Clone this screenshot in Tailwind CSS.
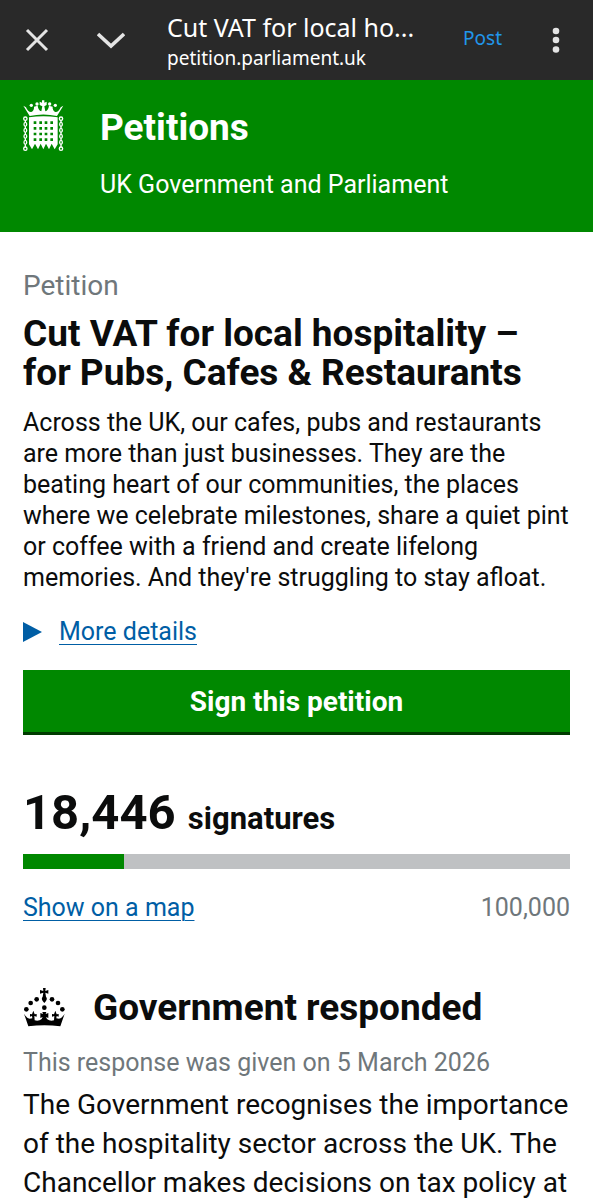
<!DOCTYPE html>
<html lang="en">
<head>
    <meta charset="UTF-8">
    <meta name="viewport" content="width=device-width, initial-scale=1.0">
    <title>Cut VAT for local hospitality – for Pubs, Cafes &amp; Restaurants</title>
    <script src="https://cdn.jsdelivr.net/npm/@tailwindcss/browser@4"></script>
</head>
<body class="bg-white text-[#0b0c0c] font-['Roboto',sans-serif] text-[25px] leading-[31px]">
    <!-- Browser bar -->
    <div class="flex items-center h-20 bg-[#292929] text-white font-['Noto_Sans',sans-serif]">
        <button type="button" aria-label="Close" class="shrink-0 w-[74px] flex justify-center">
            <svg class="w-6 h-6" viewBox="0 0 24 24" fill="none" stroke="#e4e4e4" stroke-width="3"><path d="M2 2 22 22M22 2 2 22"/></svg>
        </button>
        <button type="button" aria-label="Minimise" class="shrink-0 w-[74px] flex justify-center">
            <svg class="w-7 h-5" viewBox="0 0 28 20" fill="none" stroke="#e4e4e4" stroke-width="3.600"><path d="M1 4 14 16 27 4"/></svg>
        </button>
        <div class="flex-1 min-w-0 pl-[19px] pt-0.5">
            <div class="text-[25px] leading-[34px] truncate">Cut VAT for local ho...</div>
            <div class="text-[19px] leading-7 truncate">petition.parliament.uk</div>
        </div>
        <button type="button" class="shrink-0 mr-[50px] pb-1 text-[19px] text-[#2196ea]">Post</button>
        <button type="button" aria-label="Menu" class="shrink-0 mr-[33px]">
            <svg class="w-2 h-7" viewBox="0 0 8 28" fill="#e4e4e4"><circle cx="4" cy="5" r="3.300"/><circle cx="4" cy="14" r="3.300"/><circle cx="4" cy="23.500" r="3.300"/></svg>
        </button>
    </div>

    <header class="flex items-start gap-9 bg-[#008800] text-white px-[22px] pt-5 pb-8">
        <!-- Crowned portcullis -->
        <svg class="shrink-0 w-[42px] h-[52px]" viewBox="36 30 126 156" fill="#fff" aria-hidden="true">
            <path d="M40 47 59 78Q100 69 141 78L160 47L152 52Q146 67 136 66Q127 62 128 50L117 47Q115 61 106 64L103 49L110 45V35L103 38V31H96V38L89 35V45L97 49L94 64Q85 61 83 47L72 50Q73 62 64 66Q54 67 48 52Z"/>
            <circle cx="64" cy="46" r="5"/><circle cx="81" cy="42" r="5"/><circle cx="119" cy="42" r="5"/><circle cx="136" cy="46" r="5"/>
            <path d="M57 82Q100 76 143 82V163L134 178L125 161L117 178L108 161L100 178L92 161L84 178L75 161L66 178L57 163Z"/>
            <g stroke="#008800" stroke-width="8" stroke-dasharray="8 9" fill="none">
                <path d="M75 94V154M92 94V154M108 94V154M125 94V154"/>
            </g>
            <g fill="none" stroke="#fff" stroke-width="4">
                <circle cx="46" cy="86" r="5"/><ellipse cx="46" cy="103" rx="4" ry="6"/><ellipse cx="46" cy="121" rx="4" ry="6"/><ellipse cx="46" cy="139" rx="4" ry="6"/><ellipse cx="46" cy="157" rx="4" ry="6"/><circle cx="46" cy="176" r="5"/>
                <circle cx="153" cy="86" r="5"/><ellipse cx="153" cy="103" rx="4" ry="6"/><ellipse cx="153" cy="121" rx="4" ry="6"/><ellipse cx="153" cy="139" rx="4" ry="6"/><ellipse cx="153" cy="157" rx="4" ry="6"/><circle cx="153" cy="176" r="5"/>
                <path d="M46 91V97M46 109V115M46 127V133M46 145V151M46 163V171M153 91V97M153 109V115M153 127V133M153 145V151M153 163V171"/>
            </g>
        </svg>
        <div>
            <a href="#" class="block pt-2 text-[37px] leading-[39px] font-bold">Petitions</a>
            <p class="mt-[22px]">UK Government and Parliament</p>
        </div>
    </header>

    <main class="px-[23px] pt-[38px]">
        <p class="text-[28px] leading-8 text-[#6f777b]">Petition</p>
        <h1 class="mt-3 text-[37px] leading-[39px] font-bold">Cut VAT for local hospitality – for Pubs, Cafes &amp; Restaurants</h1>
        <p class="mt-[15px]">Across the UK, our cafes, pubs and restaurants are more than just businesses. They are the beating heart of our communities, the places where we celebrate milestones, share a quiet pint or coffee with a friend and create lifelong memories. And they're struggling to stay afloat.</p>

        <details class="mt-[23px] text-[#005ea5]">
            <summary class="flex items-center gap-[17px] cursor-pointer list-none">
                <svg class="w-[19px] h-5" viewBox="0 0 19 20" fill="currentColor" aria-hidden="true"><path d="M0 0 19 10 0 20Z"/></svg>
                <span class="underline decoration-1 underline-offset-4">More details</span>
            </summary>
        </details>

        <button type="button" class="block w-full mt-[23px] h-[65px] bg-[#008800] border-b-3 border-[#003c00] text-white text-[28px] font-bold">Sign this petition</button>

        <p class="mt-12 leading-[60px] font-bold"><span class="text-[49px]">18,446</span> <span class="ml-1.5 text-[31px]">signatures</span></p>
        <div class="mt-[3px] h-[15px] bg-[#bfc1c3]" role="progressbar" aria-label="Signatures" aria-valuenow="18446" aria-valuemin="0" aria-valuemax="100000">
            <div class="h-full bg-[#008800]" style="width: 18.446%"></div>
        </div>
        <div class="mt-[23px] flex justify-between">
            <a href="#" class="text-[#005ea5] underline decoration-1 underline-offset-4">Show on a map</a>
            <span class="text-[#6f777b]">100,000</span>
        </div>

        <section class="mt-16">
            <h2 class="flex items-center gap-7 text-[37px] leading-[39px] font-bold">
                <svg class="w-[42px] h-10" viewBox="38 34 126 120" aria-hidden="true">
                    <path d="M98 37H106L105 46L114 43V54L105 51L107 63Q112 68 107 76L102 82L97 76Q92 68 97 63L99 51L89 54V43L99 46Z"/>
                    <circle cx="102" cy="96" r="7"/>
                    <circle cx="79" cy="71" r="7"/><circle cx="61" cy="82" r="7"/><circle cx="48" cy="101" r="7"/>
                    <circle cx="125" cy="71" r="7"/><circle cx="143" cy="82" r="7"/><circle cx="156" cy="101" r="7"/>
                    <path d="M41 114 54 152Q102 145 150 152L163 114Q155 128 146 129L138 128L139 121L145 123V115L139 116L135 105L131 116L125 115V123L132 121L131 134Q118 137 110 130L107 124L114 127V112L106 115L108 109H96L98 115L90 112V127L97 124L94 130Q86 137 73 134L72 121L79 123V115L73 116L69 105L65 116L59 115V123L65 121L66 128L58 129Q49 128 41 114Z"/>
                </svg>
                Government responded
            </h2>
            <p class="mt-5 text-[#6f777b]">This response was given on 5 March 2026</p>
            <p class="mt-[7px] text-[28px] leading-[39px]">The Government recognises the importance of the hospitality sector across the UK. The Chancellor makes decisions on tax policy at</p>
        </section>
    </main>
</body>
</html>
